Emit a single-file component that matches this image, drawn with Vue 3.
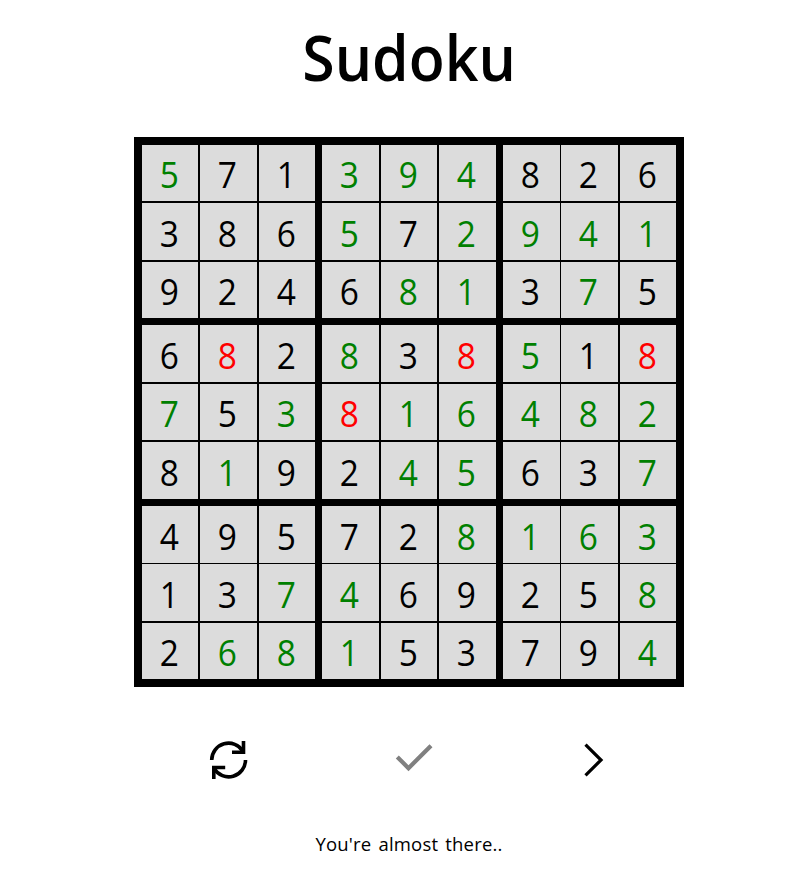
<script setup>
// g = filled in by the player, r = conflicting entry
const rows = [
  '5g 7 1 3g 9g 4g 8 2 6',
  '3 8 6 5g 7 2g 9g 4g 1g',
  '9 2 4 6 8g 1g 3 7g 5',
  '6 8r 2 8g 3 8r 5g 1 8r',
  '7g 5 3g 8r 1g 6g 4g 8g 2g',
  '8 1g 9 2 4g 5g 6 3 7g',
  '4 9 5 7 2 8g 1g 6g 3g',
  '1 3 7g 4g 6 9 2 5 8g',
  '2 6g 8g 1g 5 3 7 9 4g',
].map((row) => row.split(' ').map((c) => ({ value: c[0], state: c[1] })))
</script>

<template>
  <main class="game">
    <h1 class="title"><span>Sudoku</span></h1>
    <div class="board">
      <div v-for="(row, r) in rows" :key="r" class="row">
        <div
          v-for="(cell, c) in row"
          :key="c"
          class="cell"
          :class="{ filled: cell.state === 'g', wrong: cell.state === 'r' }"
        >
          <span class="digit">{{ cell.value }}</span>
        </div>
      </div>
    </div>
    <div class="controls">
      <button class="control" aria-label="Restart">
        <svg viewBox="0 0 60 60" fill="none" stroke="#000" stroke-width="3.6">
          <path d="M11.7 30A16.9 16.9 0 0 1 43 21.2" />
          <path d="M43.5 11V22.3H32" />
          <path d="M45.5 30A16.9 16.9 0 0 1 14.2 38.8" />
          <path d="M13.8 49V37.5H25.2" />
        </svg>
      </button>
      <button class="control" aria-label="Check">
        <svg viewBox="0 0 60 60" fill="none" stroke="#808080" stroke-width="4.2">
          <path d="M12.3 26.9L23.5 38.2L46 15.7" />
        </svg>
      </button>
      <button class="control" aria-label="Next">
        <svg viewBox="0 0 60 60" fill="none" stroke="#000" stroke-width="3.2">
          <path d="M15.5 14.7L31 30L15.5 45.3" />
        </svg>
      </button>
    </div>
    <p class="message">You're almost there..</p>
  </main>
</template>

<style>
body {
  margin: 0;
  background: #fff;
}
</style>

<style scoped>
.game {
  width: 807px;
  height: 875px;
  overflow: hidden;
  display: flex;
  flex-direction: column;
  align-items: center;
  box-sizing: border-box;
  padding-left: 11px;
  color: #000;
  font-family: 'Trebuchet MS', 'Open Sans', 'Noto Sans', sans-serif;
}
.title {
  margin: 0;
  height: 137px;
  line-height: 114px;
  font-size: 64px;
  font-weight: 600;
}
.title span {
  display: inline-block;
  transform: scaleX(0.92);
}
.board {
  flex: none;
  width: 534px;
  height: 534px;
  border: 8px solid #000;
  background: #000;
  display: grid;
  grid-template-rows: 58px 59px 63px 59px 58px 64px 58px 59px 56px;
}
.row {
  display: grid;
  grid-template-columns: 58px 59px 63px 59px 58px 64px 58px 59px 56px;
}
.cell {
  display: flex;
  align-items: center;
  justify-content: center;
  margin-right: 2px;
  margin-bottom: 2px;
  background: #dcdcdc;
  font-size: 36px;
  line-height: 50px;
  overflow: hidden;
}
.cell:nth-child(3),
.cell:nth-child(6) {
  margin-right: 7px;
}
.cell:nth-child(7) {
  margin-right: 1px;
}
.cell:nth-child(9) {
  margin-right: 0;
}
.row:nth-child(3) .cell,
.row:nth-child(6) .cell {
  margin-bottom: 7px;
}
.row:nth-child(7) .cell {
  margin-bottom: 1px;
}
.row:nth-child(9) .cell {
  margin-bottom: 0;
}
.filled {
  color: #008000;
}
.wrong {
  color: #f00;
}
.digit {
  display: block;
  padding-top: 4px;
  padding-right: 2px;
  transform: scaleX(0.93);
}
.controls {
  display: flex;
  gap: 125px;
  margin-top: 43px;
  width: 430px;
  padding-left: 12px;
}
.control {
  width: 60px;
  height: 60px;
  padding: 0;
  border: 0;
  background: none;
}
.control svg {
  display: block;
  width: 60px;
  height: 60px;
}
.message {
  margin: 40px 0 0;
  font-size: 18px;
  line-height: 28px;
  letter-spacing: 0.2px;
  word-spacing: 2px;
  font-size: 18.5px;
}
</style>
